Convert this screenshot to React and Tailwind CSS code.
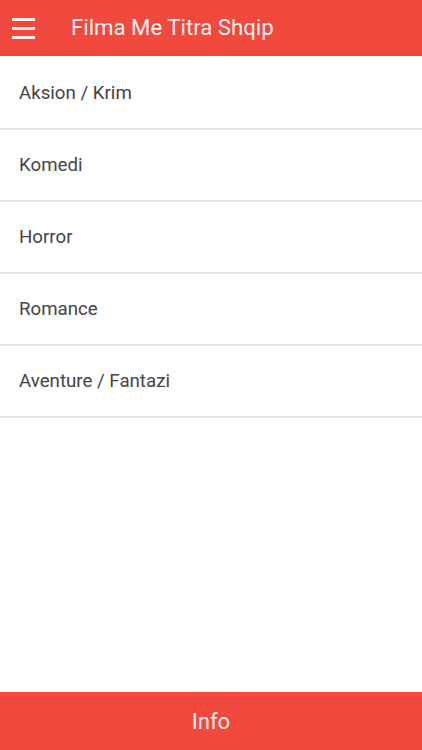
export default function App() {
  const items = ["Aksion / Krim", "Komedi", "Horror", "Romance", "Aventure / Fantazi"];
  return (
    <div className="flex h-[750px] w-[422px] flex-col bg-white" style={{ fontFamily: "Roboto, sans-serif" }}>
      <div className="flex h-[56px] shrink-0 items-center bg-[#f1493d]">
        <div className="ml-[12px] flex w-[23px] flex-col gap-[6px]">
          <div className="h-[3px] bg-white/90" />
          <div className="h-[3px] bg-white/90" />
          <div className="h-[3px] bg-white/90" />
        </div>
        <div className="ml-[36px] text-[22.2px] text-white/95">Filma Me Titra Shqip</div>
      </div>
      <div className="flex-1 pt-[2px]">
        {items.map((t) => (
          <div key={t} className="flex h-[72px] items-center border-b-2 border-[#e3e3e3] pl-[19px] text-[18.7px] text-[#444444]">
            {t}
          </div>
        ))}
      </div>
      <div className="flex h-[58px] shrink-0 items-center justify-center bg-[#f1493d] text-[22px] text-white/95">Info</div>
    </div>
  );
}
